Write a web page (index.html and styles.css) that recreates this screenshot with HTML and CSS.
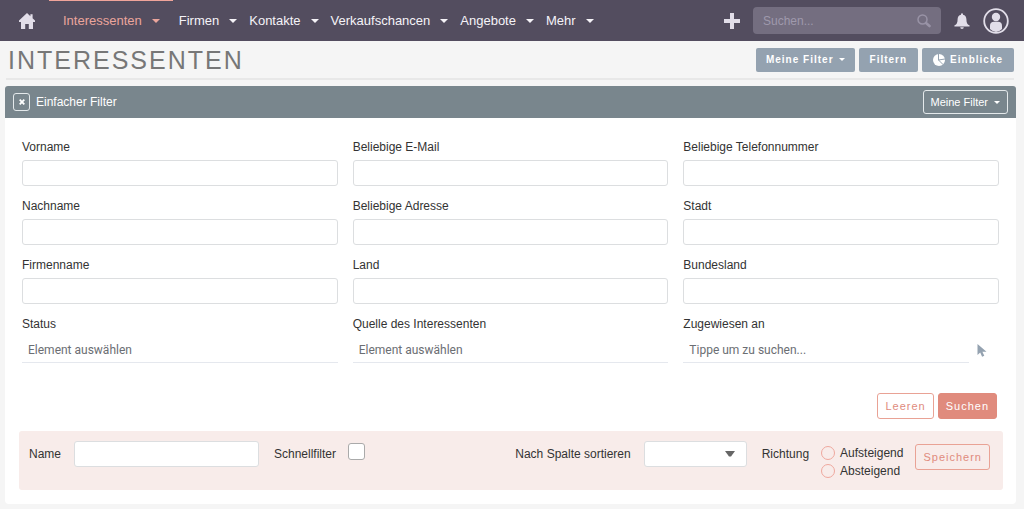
FILE: index.html
```html
<!DOCTYPE html>
<html lang="de">
<head>
<meta charset="utf-8">
<meta name="viewport" content="width=device-width, initial-scale=1">
<title>Interessenten</title>
<link rel="stylesheet" href="styles.css">
</head>
<body>
<header class="topbar">
  <a class="home" href="#" aria-label="Startseite"><svg width="16" height="16" viewBox="0 0 16 16"><path d="M8 0L0 7.600V9h2v7h4.200v-5h3.600v5H14V9h2V7.600L13.600 5.300V1.200h-2.200v2z" fill="currentColor"/></svg></a>
  <nav class="menu">
    <a class="menu-item active" href="#">Interessenten<span class="caret"></span></a>
    <a class="menu-item" href="#">Firmen<span class="caret"></span></a>
    <a class="menu-item" href="#">Kontakte<span class="caret"></span></a>
    <a class="menu-item" href="#">Verkaufschancen<span class="caret"></span></a>
    <a class="menu-item" href="#">Angebote<span class="caret"></span></a>
    <a class="menu-item" href="#">Mehr<span class="caret"></span></a>
  </nav>
  <div class="tools">
    <button class="icon-button" type="button" aria-label="Erstellen"><svg width="16" height="16" viewBox="0 0 16 16"><path d="M6 0h4v6h6v4h-6v6H6v-6H0V6h6z" fill="currentColor"/></svg></button>
    <div class="search">
      <input type="search" placeholder="Suchen..." aria-label="Suchen">
      <button class="icon-button search-button" type="button" aria-label="Suche starten"><svg width="14" height="14" viewBox="0 0 14 14" fill="none" stroke="currentColor"><circle cx="5.500" cy="5.500" r="4.500" stroke-width="1.500"/><path d="M9 9l3.500 3" stroke-width="2.600" stroke-linecap="round"/></svg></button>
    </div>
    <button class="icon-button" type="button" aria-label="Benachrichtigungen"><svg width="16" height="16" viewBox="0 0 16 16" fill="currentColor"><path d="M7 1.200a1 1 0 0 1 2 0v.5c2.200.5 3.400 2.200 3.400 4.500 0 3.600.8 5 2.900 6.100.5.300.5 1.300-.2 1.300H.9c-.7 0-.7-1-.2-1.300C2.800 11.200 3.600 9.800 3.600 6.200 3.600 3.900 4.800 2.200 7 1.700zM6.200 14.200h3.600a1.800 1.800 0 0 1-3.600 0z"/></svg></button>
    <button class="icon-button" type="button" aria-label="Benutzer"><svg width="26" height="26" viewBox="0 0 26 26"><circle cx="13" cy="13" r="11.800" fill="none" stroke="currentColor" stroke-width="1.800"/><circle cx="13" cy="9" r="4.200" fill="currentColor"/><path d="M7 21v-3.500c0-2.500 1.500-3.800 4-3.800h4c2.500 0 4 1.300 4 3.800V21q-6 6-12 0z" fill="currentColor"/></svg></button>
  </div>
</header>
<main>
  <div class="page-head">
    <h1>INTERESSENTEN</h1>
    <div class="actions">
      <button class="action action-wide" type="button">Meine Filter<span class="caret small"></span></button>
      <button class="action" type="button">Filtern</button>
      <button class="action" type="button"><svg width="12" height="12" viewBox="0 0 12 12"><circle cx="6" cy="6" r="6" fill="currentColor"/><path class="pie-cut" d="M5.500 0v6L12 5M5.500 6l5 5"/></svg>Einblicke</button>
    </div>
  </div>
  <section class="panel">
    <div class="panel-head">
      <button class="close" type="button" aria-label="Schließen"><svg width="6" height="6" viewBox="0 0 6 6"><path d="M.7.7l4.600 4.600M5.300.7L.7 5.300" stroke="currentColor" stroke-width="1.800"/></svg></button>
      <h2>Einfacher Filter</h2>
      <button class="outline-light" type="button">Meine Filter<span class="caret small"></span></button>
    </div>
    <form class="filter">
      <div class="fields">
        <div class="field"><label for="vorname">Vorname</label><input id="vorname" type="text"></div>
        <div class="field"><label for="email">Beliebige E-Mail</label><input id="email" type="text"></div>
        <div class="field"><label for="telefon">Beliebige Telefonnummer</label><input id="telefon" type="text"></div>
        <div class="field"><label for="nachname">Nachname</label><input id="nachname" type="text"></div>
        <div class="field"><label for="adresse">Beliebige Adresse</label><input id="adresse" type="text"></div>
        <div class="field"><label for="stadt">Stadt</label><input id="stadt" type="text"></div>
        <div class="field"><label for="firma">Firmenname</label><input id="firma" type="text"></div>
        <div class="field"><label for="land">Land</label><input id="land" type="text"></div>
        <div class="field"><label for="bundesland">Bundesland</label><input id="bundesland" type="text"></div>
        <div class="field"><label for="status">Status</label><input id="status" class="line-input" type="text" placeholder="Element auswählen"></div>
        <div class="field"><label for="quelle">Quelle des Interessenten</label><input id="quelle" class="line-input" type="text" placeholder="Element auswählen"></div>
        <div class="field"><label for="zugewiesen">Zugewiesen an</label>
          <div class="picker"><input id="zugewiesen" class="line-input" type="text" placeholder="Tippe um zu suchen..."><button class="icon-button picker-button" type="button" aria-label="Benutzer auswählen"><svg width="10" height="13" viewBox="0 0 10 13"><path d="M.5 0v11l2.700-2.500 1.900 4.300 2.200-1-1.900-4.100H9.500z" fill="currentColor"/></svg></button></div>
        </div>
      </div>
      <div class="submit-row">
        <button class="coral" type="reset">Leeren</button>
        <button class="coral filled" type="submit">Suchen</button>
      </div>
      <div class="save-bar">
        <label class="control" for="name">Name</label>
        <input id="name" class="name-input" type="text">
        <label class="control" for="quick">Schnellfilter</label>
        <input id="quick" class="check" type="checkbox">
        <label class="control sort-label" for="sort">Nach Spalte sortieren</label>
        <span class="select-wrap"><select id="sort"><option></option></select><svg class="arrow" width="10" height="6" viewBox="0 0 10 6"><path d="M0 0h10L6 5.500H4z" fill="currentColor"/></svg></span>
        <span class="control direction-label" id="direction">Richtung</span>
        <div class="radios" role="radiogroup" aria-labelledby="direction">
          <label><input type="radio" name="dir">Aufsteigend</label>
          <label><input type="radio" name="dir">Absteigend</label>
        </div>
        <button class="coral save" type="button">Speichern</button>
      </div>
    </form>
  </section>
</main>
</body>
</html>
```
FILE: styles.css
```css
* { box-sizing: border-box; }
body {
  margin: 0;
  background: #f5f5f5;
  color: #333;
  font: 12px/16px "Liberation Sans", Arial, sans-serif;
}
button, input, select { font: inherit; margin: 0; }
button { cursor: pointer; }
h1, h2 { margin: 0; font-weight: normal; }

.topbar {
  display: flex;
  align-items: center;
  height: 41px;
  padding: 0 15px 0 19px;
  background: #534d5f;
  color: #e2dee9;
}
.home { display: flex; color: inherit; }
.menu { display: flex; align-self: stretch; margin-left: 14px; font-size: 13px; }
.menu-item {
  display: flex;
  align-items: center;
  gap: 10px;
  padding: 0 6px;
  border-top: 1px solid transparent;
  color: #f5f3f8;
  text-decoration: none;
}
.menu-item.active { padding: 0 13px 0 14px; border-color: #f0a49a; color: #eba59c; }
.caret {
  border: 4px solid transparent;
  border-top-color: currentColor;
  border-bottom: 0;
}
.caret.small { border-width: 3px; border-bottom: 0; }
.tools { display: flex; align-items: center; gap: 13px; margin-left: auto; }
.icon-button {
  display: flex;
  padding: 0;
  border: 0;
  background: none;
  color: inherit;
}
.search {
  display: flex;
  align-items: center;
  width: 188px;
  height: 27px;
  padding: 0 10px;
  border-radius: 4px;
  background: #746e80;
  color: #9993a6;
}
.search input {
  flex: 1;
  min-width: 0;
  padding: 0;
  border: 0;
  outline: 0;
  background: none;
  color: #fff;
}
.search input::placeholder { color: #9f99ac; opacity: 1; }

.page-head {
  display: flex;
  align-items: center;
  justify-content: space-between;
  height: 39px;
  margin: 0 10px 6px 6px;
  border-bottom: 2px solid #e8e8e8;
}
h1 { padding-left: 2px; font-size: 25px; line-height: 30px; letter-spacing: 2px; color: #777; }
.actions { display: flex; gap: 4px; }
.action {
  display: flex;
  align-items: center;
  gap: 5px;
  height: 24px;
  padding: 0 11px;
  border: 0;
  border-radius: 2px;
  background: #94a2b0;
  color: #fff;
  font-size: 10px;
  font-weight: bold;
  letter-spacing: 1px;
}
.action-wide { padding: 0 10px; }
.pie-cut { fill: none; stroke: #94a2b0; stroke-width: 1; }

.panel { margin: 0 8px 5px 5px; border-radius: 4px; background: #fff; }
.panel-head {
  display: flex;
  align-items: center;
  height: 32px;
  padding: 0 8px;
  border-radius: 3px 3px 0 0;
  background: #79868d;
  color: #fff;
}
.close {
  display: flex;
  align-items: center;
  justify-content: center;
  width: 17px;
  height: 18px;
  padding: 0;
  border: 1px solid #e4e9eb;
  border-radius: 3px;
  background: none;
  color: #fff;
}
h2 { padding-left: 6px; font-size: 12px; }
.outline-light {
  display: flex;
  align-items: center;
  gap: 6px;
  height: 24px;
  margin-left: auto;
  padding: 0 7px;
  border: 1px solid #e4e9eb;
  border-radius: 3px;
  background: none;
  color: #fff;
  font-size: 11px;
}

.filter { padding: 21px 13px 14px 14px; }
.fields {
  display: grid;
  grid-template-columns: repeat(3, 1fr);
  gap: 12px 15px;
  padding: 0 4px 0 3px;
}
.field { display: flex; flex-direction: column; gap: 5px; }
.field input, .name-input, select {
  width: 100%;
  height: 26px;
  padding: 0 6px;
  border: 1px solid #dcdee0;
  border-radius: 3px;
  background: #fff;
  color: #333;
}
.field .line-input {
  border-width: 0 0 1px;
  border-color: #e5e8ee;
  border-radius: 0;
  font-family: Roboto, sans-serif;
}
.line-input::placeholder { color: #6b6e73; opacity: 1; }
.picker { display: flex; align-items: center; }
.picker-button { padding: 0 12px 0 8px; color: #94a2b0; }

.submit-row { display: flex; justify-content: flex-end; gap: 4px; margin-top: 30px; padding-right: 6px; }
.coral {
  height: 26px;
  padding: 0 7px;
  border: 1px solid #e9a295;
  border-radius: 3px;
  background: none;
  color: #e08b7d;
  font-size: 11px;
  letter-spacing: 1px;
}
.coral.filled { border-color: #e08b7d; background: #e08b7d; color: #fff; }

.save-bar {
  display: flex;
  align-items: flex-start;
  margin-top: 12px;
  padding: 10px 13px 11px 10px;
  border-radius: 3px;
  background: #f8ecea;
}
.control { line-height: 26px; white-space: nowrap; }
.name-input { flex: 0 1 185px; min-width: 80px; margin: 0 15px 0 13px; }
.check {
  appearance: none;
  width: 17px;
  height: 17px;
  margin: 2px 0 0 12px;
  border: 1px solid #aaa;
  border-radius: 3px;
  background: #fff;
}
.sort-label { margin-left: auto; }
.select-wrap { position: relative; width: 103px; margin: 0 15px 0 13px; }
select { appearance: none; }
.arrow { position: absolute; top: 10px; right: 12px; color: #666; pointer-events: none; }
.radios { display: flex; flex-direction: column; gap: 2px; margin: 4px 12px 0 12px; }
.radios label { display: flex; align-items: center; gap: 5px; }
.radios input {
  appearance: none;
  width: 14px;
  height: 14px;
  border: 1px solid #efa89e;
  border-radius: 50%;
}
.save { margin-top: 3px; }
.check:checked { background: #e08b7d; }
.radios input:checked { background: #efa89e; }
```
